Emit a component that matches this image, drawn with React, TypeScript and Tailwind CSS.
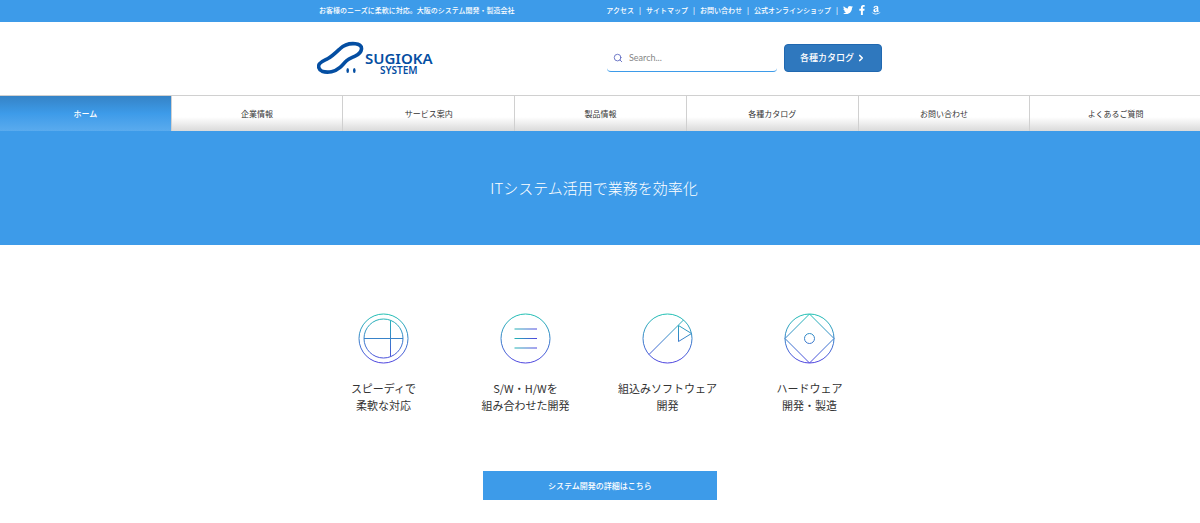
import type { ReactNode } from 'react';
import { ChevronRight, Search } from 'lucide-react';
import { FaAmazon, FaFacebookF, FaTwitter } from 'react-icons/fa';

const topLinks = ['アクセス', 'サイトマップ', 'お問い合わせ', '公式オンラインショップ'];

const navItems = [
  'ホーム',
  '企業情報',
  'サービス案内',
  '製品情報',
  '各種カタログ',
  'お問い合わせ',
  'よくあるご質問',
];

const features: { lines: string[]; icon: ReactNode }[] = [
  {
    lines: ['スピーディで', '柔軟な対応'],
    icon: (
      <>
        <circle cx="25.5" cy="25.5" r="19.5" />
        <path d="M6 25.5h39M32.5 7.5v36" />
      </>
    ),
  },
  {
    lines: ['S/W・H/Wを', '組み合わせた開発'],
    icon: <path d="M14.5 16h22.5M14.5 25.5h22.5M14.5 35h22.5" stroke="url(#line-across)" />,
  },
  {
    lines: ['組込みソフトウェア', '開発'],
    icon: <path d="M7 41.5L41.5 7M36.5 12.5v16l13-8z" />,
  },
  {
    lines: ['ハードウェア', '開発・製造'],
    icon: (
      <>
        <path d="M25.5 1L50 25.5L25.5 50L1 25.5z" />
        <circle cx="25.5" cy="25.5" r="5" />
      </>
    ),
  },
];

function Logo() {
  return (
    <a href="#" className="flex items-start text-[#044ea2]">
      <svg width="48" height="36" viewBox="0 0 48 36" fill="none">
        <path
          d="M23 8.7C27 4.800 33 3.200 38.300 3.700C42 4 44.800 5.800 44.500 9C44.200 12 41.500 14.500 38 16.200C34.500 17.800 32 18.500 29.500 20.800C26.500 23.700 25.200 25.500 22.700 27.700C20.300 29.800 18 31 14.500 31.700C11.500 32.300 8 32.300 5 31.200C1.500 29.800 .9 26 2.500 23.800C4.500 21 8 20.200 11 18.500C15.500 16 19 12.500 23 8.700Z"
          stroke="currentColor"
          strokeWidth="3.600"
        />
        <ellipse cx="30.700" cy="30.500" rx="1.300" ry="2.500" fill="currentColor" />
        <ellipse cx="37.300" cy="30.500" rx="1.300" ry="2.500" fill="currentColor" />
      </svg>
      <span className="flex flex-col items-center pt-3 font-['Noto_Sans',sans-serif] font-semibold">
        <span className="text-[15px] leading-[13px]">SUGIOKA</span>
        <span className="text-[10px] leading-[11px]">SYSTEM</span>
      </span>
    </a>
  );
}

function TopBar() {
  return (
    <div className="bg-[#3d9be9] text-[7px] font-medium text-white">
      <div className="mx-auto flex h-[22px] max-w-[566px] items-center justify-between px-0.5 pb-0.5">
        <p>お客様のニーズに柔軟に対応。大阪のシステム開発・製造会社</p>
        <div className="flex items-center">
          {topLinks.map((link) => (
            <span key={link} className="flex">
              <a href="#">{link}</a>
              <span className="w-3 text-center">|</span>
            </span>
          ))}
          <div className="flex items-center gap-1">
            <a href="#" aria-label="Twitter"><FaTwitter className="h-2.5 w-2.5" /></a>
            <a href="#" aria-label="Facebook"><FaFacebookF className="h-2.5 w-2.5" /></a>
            <a href="#" aria-label="Amazon"><FaAmazon className="h-2.5 w-2.5" /></a>
          </div>
        </div>
      </div>
    </div>
  );
}

function Header() {
  return (
    <header className="mx-auto flex max-w-[566px] items-start justify-between pt-[18px] pb-[19px]">
      <Logo />
      <div className="flex items-center gap-[7px] pt-1 pr-px">
        <label className="flex h-7 w-[170px] items-center gap-1.5 rounded-b border-b border-[#3d9be9] px-1.5">
          <Search className="h-2.5 w-2.5 text-[#5661bd]" />
          <input
            type="search"
            aria-label="Search"
            placeholder="Search..."
            className="min-w-0 flex-1 font-['Lato',sans-serif] text-[9px] outline-none placeholder:text-[#868686]"
          />
        </label>
        <button className="flex h-7 w-[98px] items-center justify-center gap-0.5 rounded border border-[#2068b0] bg-[#2f78be] text-[9px] font-medium text-white">
          各種カタログ
          <ChevronRight className="h-2.5 w-2.5" strokeWidth={4} />
        </button>
      </div>
    </header>
  );
}

export default function App() {
  return (
    <div
      lang="ja"
      className="min-h-screen overflow-hidden bg-white font-['Noto_Sans_CJK_JP',sans-serif] text-[#333]"
    >
      <TopBar />
      <Header />

      <nav className="-mr-0.5 grid grid-cols-7 border-t border-[#d0d0d0] text-[8px]">
        {navItems.map((item, i) => (
          <a
            key={item}
            href="#"
            className={
              i === 0
                ? 'flex h-[35px] items-center justify-center border-r border-[#d0d0d0] bg-linear-to-b from-[#3583c6] via-[#3d9be9] to-[#5aabee] font-medium text-white'
                : 'flex h-[35px] items-center justify-center border-r border-[#d0d0d0] bg-linear-to-b from-white from-60% to-[#dadada] text-[#333]'
            }
          >
            {item}
          </a>
        ))}
      </nav>

      <section className="flex h-[114px] items-center justify-center bg-[#3d9be9] pr-3">
        <h1 className="text-[15px] font-light text-white">ITシステム活用で業務を効率化</h1>
      </section>

      <svg className="absolute h-0 w-0" aria-hidden="true">
        <defs>
          <linearGradient id="line-down" gradientUnits="userSpaceOnUse" x1="0" y1="0" x2="0" y2="51">
            <stop offset="0" stopColor="#20c3b2" />
            <stop offset="1" stopColor="#5042e0" />
          </linearGradient>
          <linearGradient id="line-across" gradientUnits="userSpaceOnUse" x1="14" y1="0" x2="37" y2="0">
            <stop offset="0" stopColor="#20b8b2" />
            <stop offset="1" stopColor="#5042e0" />
          </linearGradient>
        </defs>
      </svg>

      <section className="pt-[68px] pr-[7px]">
        <div className="mx-auto grid max-w-[568px] grid-cols-4">
          {features.map((feature) => (
            <div key={feature.lines[0]} className="flex flex-col items-center">
              <svg width="51" height="51" viewBox="0 0 51 51" fill="none" stroke="url(#line-down)">
                <circle cx="25.5" cy="25.5" r="24.500" />
                {feature.icon}
              </svg>
              <p className="pt-4 text-center text-[11px] leading-[17px]">
                {feature.lines[0]}
                <br />
                {feature.lines[1]}
              </p>
            </div>
          ))}
        </div>
      </section>

      <div className="flex justify-center pt-[57px]">
        <a
          href="#"
          className="flex h-[29px] w-[234px] items-center justify-center bg-[#3d9be9] text-[8px] font-medium text-white"
        >
          システム開発の詳細はこちら
        </a>
      </div>
    </div>
  );
}
